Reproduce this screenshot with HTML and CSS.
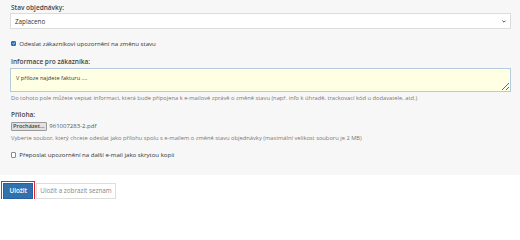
FILE: index.html
```html
<!DOCTYPE html>
<html lang="cs">
<head>
<meta charset="utf-8">
<title>Stav objednávky</title>
<link rel="stylesheet" href="styles.css">
</head>
<body>
<div class="panel">
  <label class="lbl">Stav objednávky:</label>
  <div class="select">
    <span>Zaplaceno</span>
    <svg class="chev" width="4" height="3" viewBox="0 0 4 3"><path d="M0.4 0.6 L2 2.2 L3.6 0.6" fill="none" stroke="#444" stroke-width="0.9"/></svg>
  </div>
  <div class="check-row first">
    <span class="cb checked"><svg width="5" height="5" viewBox="0 0 6 6"><path d="M1 3.2 L2.5 4.6 L5 1.4" fill="none" stroke="#fff" stroke-width="1.3"/></svg></span>
    <span>Odeslat zákazníkovi upozornění na změnu stavu</span>
  </div>
  <label class="lbl lbl-info">Informace pro zákazníka:</label>
  <textarea class="ta">V příloze najdete fakturu ....</textarea>
  <div class="help">Do tohoto pole můžete vepsat informaci, která bude připojena k e-mailové zprávě o změně stavu (např. info k úhradě, trackovací kód u dodavatele, atd.)</div>
  <label class="lbl lbl-file">Příloha:</label>
  <div class="file-row">
    <span class="browse">Procházet...</span>
    <span class="fname">961007283-2.pdf</span>
  </div>
  <div class="help help2">Vyberte soubor, který chcete odeslat jako přílohu spolu s e-mailem o změně stavu objednávky (maximální velikost souboru je 2 MB)</div>
  <div class="check-row second">
    <span class="cb"></span>
    <span>Přeposlat upozornění na další e-mail jako skrytou kopii</span>
  </div>
</div>
<div class="actions">
  <button class="btn btn-primary">Uložit</button>
  <button class="btn btn-secondary">Uložit a zobrazit seznam</button>
</div>
</body>
</html>
```
FILE: styles.css
```css
html, body {
  margin: 0;
  padding: 0;
  background: #fff;
  font-family: "Open Sans", "Liberation Sans", sans-serif;
  font-size: 6.5px;
  color: #333;
}
.panel {
  background: #f7f7f7;
  padding: 2.5px 9px 15.5px 10px;
  height: 157px;
  display: flex;
  flex-direction: column;
}
.lbl {
  display: block;
  line-height: 9px;
  font-weight: 600;
  color: #444;
  margin-left: 1px;
}
.select {
  margin-top: 1.8px;
  height: 16px;
  box-sizing: border-box;
  background: #fff;
  border: 1px solid #dcdcdc;
  display: flex;
  align-items: center;
  justify-content: space-between;
  padding: 0 4px 0 4px;
  color: #333;
  font-size: 6.3px;
}
.chev { display: block; margin-top: 1px; }
.check-row {
  display: flex;
  align-items: center;
  gap: 3.3px;
  line-height: 9px;
  margin-left: 0.5px;
  font-size: 6.1px;
}
.check-row.first { margin-top: 9.7px; }
.check-row.second { margin-top: 8.8px; }
.cb {
  width: 5.5px;
  height: 5.5px;
  box-sizing: border-box;
  border: 0.8px solid #8a8a8a;
  border-radius: 1px;
  background: #fff;
  display: flex;
  align-items: center;
  justify-content: center;
  flex: none;
}
.cb.checked {
  background: #2a6db5;
  border-color: #2a6db5;
}
.cb svg { display: block; width: 4.6px; height: 4.6px; }
.lbl-info { margin-top: 9.2px; }
.ta {
  margin: 1.5px 0 0 0;
  height: 24px;
  box-sizing: border-box;
  background: #ffffe3;
  border: 1px solid #b7cbdf;
  border-radius: 0;
  font-family: inherit;
  font-size: 5.6px;
  line-height: 9px;
  color: #333;
  padding: 5.5px 5px;
  resize: vertical;
  outline: none;
  width: 100%;
  display: block;
}
.help {
  margin-top: 2px;
  font-size: 5.75px;
  line-height: 8px;
  color: #777;
  white-space: nowrap;
  margin-left: 1px;
}
.lbl-file { margin-top: 8.1px; }
.file-row {
  margin-top: 2.9px;
  display: flex;
  align-items: center;
  gap: 2.6px;
  margin-left: 1px;
}
.browse {
  height: 9.5px;
  box-sizing: border-box;
  width: 35.7px;
  background: #e2e2e2;
  border: 0.8px solid #9a9a9a;
  border-radius: 1px;
  font-weight: 600;
  color: #444;
  font-size: 5.6px;
  display: flex;
  align-items: center;
  justify-content: center;
  white-space: nowrap;
  overflow: hidden;
}
.fname { color: #555; font-size: 6px; }
.help2 { margin-top: 2.5px; }
.actions {
  display: flex;
  align-items: flex-start;
  gap: 3px;
  padding: 7.7px 0 0 3.3px;
}
.btn {
  font-family: inherit;
  font-size: 6.3px;
  box-sizing: border-box;
  margin: 0;
  border-radius: 0;
  cursor: pointer;
}
.btn-primary {
  width: 30px;
  height: 16px;
  background: #3171ae;
  border: 1px solid #2a62a0;
  color: #fff;
  font-weight: 600;
  outline: 1.4px solid #e3232f;
  outline-offset: 1px;
  padding: 0;
}
.btn-secondary {
  width: 79.3px;
  height: 16.6px;
  background: #fff;
  border: 1px solid #dddddd;
  color: #888;
  padding: 0;
}
```
